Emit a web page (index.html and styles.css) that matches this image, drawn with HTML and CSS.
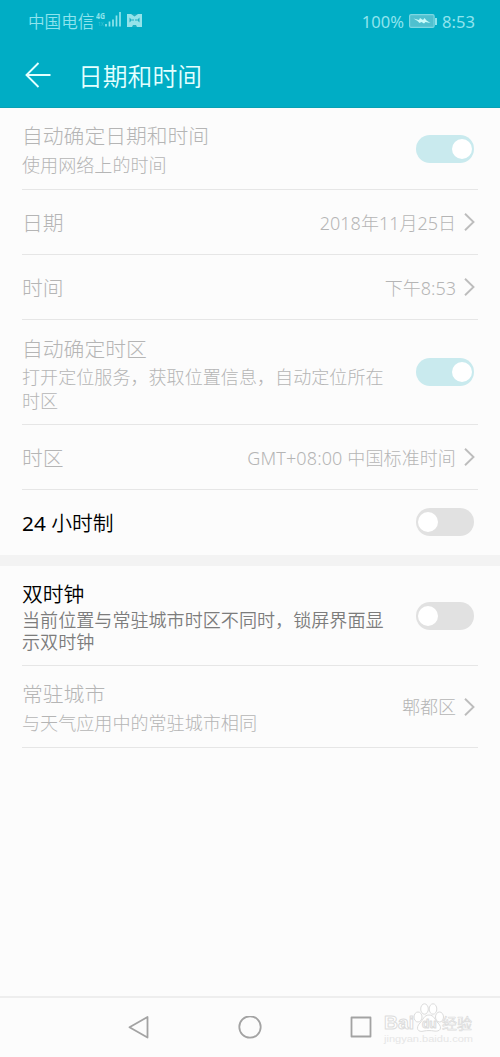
FILE: index.html
```html
<!DOCTYPE html>
<html lang="zh-CN">
<head>
    <meta charset="UTF-8">
    <meta name="viewport" content="width=device-width, initial-scale=1.0">
    <title>日期和时间</title>
    <link rel="stylesheet" href="styles.css">
</head>
<body>
    <header class="header">
        <div class="status">
            <span class="carrier">中国电信</span>
            <svg class="signal" width="26" height="18" viewBox="0 0 26 18">
                <text x="0" y="8" class="net" textLength="9" lengthAdjust="spacingAndGlyphs">4G</text>
                <text x="2" y="15" class="net-small">1X</text>
                <path d="M10 13v2.500M13.500 10.500v5M17 8.500v7M20.500 4.500v11M24 1v14.500" stroke="#8fe4ec" stroke-width="1.700"/>
            </svg>
            <svg class="nfc" width="15" height="13" viewBox="0 0 15 13">
                <path d="M0 0h15v13H0z" fill="#94e3ea"/>
                <path d="M4 0 7.500 2.500 11 0zM5 13l1-2h3l1 2zM2.500 3.500 5 6l-2.500 2.500M12.500 3.500 10 6l2.500 2.500" fill="#1eafc2"/>
                <path d="M6 5v2M9 5v2" stroke="#1eafc2"/>
            </svg>
            <span class="percent">100%</span>
            <svg class="battery" width="29" height="14" viewBox="0 0 29 14">
                <rect x=".6" y=".6" width="24.500" height="12.800" rx="1.500" fill="#4fc0cf" stroke="#7cd7e2" stroke-width="1.200"/>
                <path d="M4.500 4.500 10 6l1-2 3 2 1.500-2 2 2.500 4 2.500-5-1-1.500 1.500-2.500-1.500-2 1-2-2z" fill="#c9fbfa"/>
                <path d="M27 4v7" stroke="#8be3ec" stroke-width="2"/>
            </svg>
            <span class="clock">8:53</span>
        </div>
        <div class="bar">
            <svg class="back" width="26" height="26" viewBox="0 0 26 26">
                <path d="M25.500 13H1.500M13.500 1 1.500 13l12 12" fill="none" stroke="#e4ffff" stroke-width="1.900"/>
            </svg>
            <h1>日期和时间</h1>
        </div>
    </header>

    <main>
        <section class="group">
            <div class="row tall disabled">
                <div class="label">
                    <div class="title">自动确定日期和时间</div>
                    <div class="desc">使用网络上的时间</div>
                </div>
                <div class="switch on"></div>
            </div>
            <div class="row disabled">
                <div class="title">日期</div>
                <div class="value">2018年11月25日</div>
                <svg class="arrow" width="11" height="18" viewBox="0 0 11 18"><path d="M1 .8 9.500 9 1 17.200"/></svg>
            </div>
            <div class="row disabled">
                <div class="title">时间</div>
                <div class="value">下午8:53</div>
                <svg class="arrow" width="11" height="18" viewBox="0 0 11 18"><path d="M1 .8 9.500 9 1 17.200"/></svg>
            </div>
            <div class="row zone disabled">
                <div class="label">
                    <div class="title">自动确定时区</div>
                    <div class="desc">打开定位服务，获取位置信息，自动定位所在时区</div>
                </div>
                <div class="switch on"></div>
            </div>
            <div class="row disabled">
                <div class="title">时区</div>
                <div class="value gmt">GMT+08:00 中国标准时间</div>
                <svg class="arrow" width="11" height="18" viewBox="0 0 11 18"><path d="M1 .8 9.500 9 1 17.200"/></svg>
            </div>
            <div class="row last">
                <div class="title"><span class="digits">24</span> 小时制</div>
                <div class="switch"></div>
            </div>
        </section>

        <section class="group">
            <div class="row dual">
                <div class="label">
                    <div class="title">双时钟</div>
                    <div class="desc">当前位置与常驻城市时区不同时，锁屏界面显示双时钟</div>
                </div>
                <div class="switch"></div>
            </div>
            <div class="row tall disabled">
                <div class="label">
                    <div class="title">常驻城市</div>
                    <div class="desc">与天气应用中的常驻城市相同</div>
                </div>
                <div class="value">郫都区</div>
                <svg class="arrow" width="11" height="18" viewBox="0 0 11 18"><path d="M1 .8 9.500 9 1 17.200"/></svg>
            </div>
        </section>
    </main>

    <footer class="nav">
        <svg width="24" height="24" viewBox="0 0 24 24"><path d="M20.500 1V21.500L2.500 11.200z"/></svg>
        <svg width="24" height="24" viewBox="0 0 24 24"><circle cx="12" cy="11" r="10.700"/></svg>
        <svg width="24" height="24" viewBox="0 0 24 24"><rect x="2.500" y="1.500" width="19" height="19"/></svg>
        <svg class="watermark" width="96" height="46" viewBox="0 0 96 46">
            <g class="paw">
                <ellipse cx="35" cy="15" rx="4" ry="5"/>
                <ellipse cx="41.500" cy="7" rx="3.800" ry="5.200"/>
                <ellipse cx="50" cy="7" rx="3.800" ry="5.200"/>
                <ellipse cx="56.500" cy="15" rx="4" ry="5"/>
                <path d="M46 13c-5 0-6 5-9 8-5 5-2 10 4 8 3-.6 7-.6 10 0 6 1 9-3 4-8-3-3-4-8-9-8z"/>
            </g>
            <text class="mark" x="1" y="27" textLength="30" lengthAdjust="spacingAndGlyphs">Bai</text>
            <text class="mark du" x="39" y="26">du</text>
            <text class="mark cn" x="59" y="27">经验</text>
            <text class="site" x="1" y="40" textLength="89" lengthAdjust="spacingAndGlyphs">jingyan.baidu.com</text>
        </svg>
    </footer>
</body>
</html>
```
FILE: styles.css
```css
* {
    box-sizing: border-box;
}
body {
    margin: 0;
    height: 1057px;
    display: flex;
    flex-direction: column;
    font-family: "Noto Sans", "Noto Sans CJK SC", sans-serif;
    font-weight: 300;
    background-color: #fcfcfc;
    color: #000;
    overflow: hidden;
}
.header {
    height: 108px;
    background-color: #00adc5;
    border-bottom: 1px solid #08a1b4;
}
.status {
    display: flex;
    align-items: center;
    height: 42px;
    padding: 1px 25px 0 28px;
    font-size: 16.6px;
    line-height: 24px;
    font-weight: 400;
    color: #8fe4ee;
}
.carrier {
    font-weight: 350;
}
.signal {
    margin: -3px 0 0 2px;
}
.net {
    font-size: 8.5px;
    font-weight: 700;
    fill: #8fe4ec;
}
.net-small {
    font-size: 5px;
    fill: #42c5d5;
}
.nfc {
    margin: -2px 0 0 5px;
}
.percent {
    margin-left: auto;
}
.battery {
    margin: -1px 4px 0 5px;
}
.bar {
    display: flex;
    align-items: center;
    height: 66px;
    padding-left: 25px;
}
.bar h1 {
    margin: 2px 0 0 27px;
    font-size: 24.8px;
    line-height: 34px;
    font-weight: 350;
    color: #e4ffff;
}
main {
    flex: 1;
}
.group + .group {
    border-top: 11px solid #f3f3f3;
}
.row {
    display: flex;
    align-items: center;
    height: 65px;
    margin: 0 22px;
    border-bottom: 1px solid #e6e6e6;
}
.row.tall {
    height: 82px;
}
.row.zone {
    height: 105px;
}
.row.dual {
    height: 100px;
}
.row.last {
    padding-bottom: 1px;
    border-bottom: 0;
}
.label {
    width: 368px;
    padding-top: 2px;
}
.title {
    font-size: 20.8px;
    line-height: 30px;
    font-weight: 350;
    white-space: nowrap;
}
.digits {
    font-weight: 400;
}
.row > .title,
.value {
    padding-top: 1px;
}
.desc {
    font-size: 18.08px;
    line-height: 24px;
    font-weight: 350;
    color: #7c7c7c;
}
.tall .desc {
    line-height: 28px;
}
.zone .desc {
    padding-top: 1px;
}
.dual .label {
    padding-top: 0;
}
.dual .desc {
    line-height: 22px;
}
.disabled .title,
.disabled .desc,
.disabled .value {
    font-weight: 300;
    color: #b5b5b5;
}
.value {
    margin-left: auto;
    font-size: 18px;
    line-height: 26px;
    white-space: nowrap;
}
.value.gmt {
    letter-spacing: 0.12px;
}
.arrow {
    flex: none;
    margin: 0 3px 0 8px;
    fill: none;
    stroke: #bdbdbd;
    stroke-width: 1.9;
}
.switch {
    display: flex;
    flex: none;
    width: 58px;
    height: 28px;
    margin: 0 4px 0 auto;
    padding: 4px 2px;
    border-radius: 14px;
    background-color: #e1e1e1;
}
.switch::before {
    content: "";
    width: 20px;
    height: 20px;
    border-radius: 50%;
    background-color: #fff;
}
.switch.on {
    justify-content: flex-end;
    background-color: #c9eaee;
}
.nav {
    position: relative;
    display: flex;
    justify-content: center;
    align-items: center;
    gap: 87px;
    height: 61px;
    border-top: 2px solid #eee;
}
.nav svg {
    fill: none;
    stroke: #a3a3a3;
    stroke-width: 1.8;
    stroke-linejoin: round;
}
/* sits over the right end of the navigation bar */
.nav .watermark {
    position: absolute;
    right: 21px;
    top: 4px;
    stroke: #dcdcdc;
    stroke-width: 1;
}
.paw {
    fill: #fff;
}
.mark {
    font-family: "Liberation Sans", "Noto Sans CJK SC", sans-serif;
    font-size: 19px;
    font-weight: 700;
    fill: #fff;
}
.mark.du {
    font-size: 12px;
}
.mark.cn {
    font-size: 15px;
    font-weight: 400;
    stroke-width: 0.7;
}
.site {
    font-family: "Liberation Sans", sans-serif;
    font-size: 9px;
    fill: #e6e6e6;
    stroke: none;
}
```
